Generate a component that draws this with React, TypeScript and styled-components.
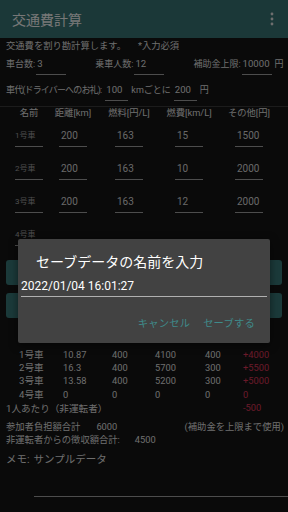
import styled, { createGlobalStyle } from 'styled-components';

const GlobalStyle = createGlobalStyle`
  html, body {
    margin: 0;
    padding: 0;
    background: #141414;
  }
  body {
    font-family: Roboto, "Noto Sans CJK JP", sans-serif;
  }
`;

const CARS = [
  { name: '1号車', distance: '200', fuel: '163', economy: '15', other: '1500' },
  { name: '2号車', distance: '200', fuel: '163', economy: '10', other: '2000' },
  { name: '3号車', distance: '200', fuel: '163', economy: '12', other: '2000' },
  { name: '4号車', distance: '', fuel: '', economy: '', other: '' },
];

const RESULTS = [
  ['1号車', '10.87', '400', '4100', '400', '+4000'],
  ['2号車', '16.3', '400', '5700', '300', '+5500'],
  ['3号車', '13.58', '400', '5200', '300', '+5000'],
  ['4号車', '0', '0', '0', '0', '0'],
];

const HEADERS = ['名前', '距離[km]', '燃料[円/L]', '燃費[km/L]', 'その他[円]'];

function MoreIcon() {
  return (
    <svg width="4" height="14" viewBox="0 0 4 14">
      <circle cx="2" cy="2" r="1.4" fill="#dddddd" />
      <circle cx="2" cy="7" r="1.4" fill="#dddddd" />
      <circle cx="2" cy="12" r="1.4" fill="#dddddd" />
    </svg>
  );
}

export default function App() {
  return (
    <Screen>
      <GlobalStyle />
      <AppBar>
        <Title>交通費計算</Title>
        <MoreIcon />
      </AppBar>

      <Content>
        <Intro>
          交通費を割り勘計算します。<Required>*入力必須</Required>
        </Intro>

        <FieldRow $gap={29}>
          <Field>
            <Label>車台数:</Label>
            <Input $w={30}>3</Input>
          </Field>
          <Field>
            <Label>乗車人数:</Label>
            <Input $w={30}>12</Input>
          </Field>
          <Field>
            <Label>補助金上限:</Label>
            <Input $w={30}>10000</Input>
            <Unit>円</Unit>
          </Field>
        </FieldRow>

        <FieldRow $gap={0} $top={9}>
          <Field>
            <Label $tight>車代(ドライバーへのお礼):</Label>
            <Input $w={23}>100</Input>
            <Unit>kmごとに</Unit>
            <Input $w={23}>200</Input>
            <Unit>円</Unit>
          </Field>
        </FieldRow>

        <Divider />

        <TableHead>
          {HEADERS.map((h) => (
            <HeadCell key={h}>{h}</HeadCell>
          ))}
        </TableHead>

        <TableBody>
          {CARS.map((car) => [
            <CarCell key={car.name + '-n'}>{car.name}</CarCell>,
            <Cell key={car.name + '-d'}>{car.distance}</Cell>,
            <Cell key={car.name + '-f'}>{car.fuel}</Cell>,
            <Cell key={car.name + '-e'}>{car.economy}</Cell>,
            <Cell key={car.name + '-o'}>{car.other}</Cell>,
          ])}
        </TableBody>

        <Buttons>
          <ActionButton />
          <ActionButton />
        </Buttons>

        <Results>
          {RESULTS.map((row) =>
            row.map((v, i) => (
              <ResultCell key={row[0] + i} $car={i === 0} $diff={i === 5}>
                {v}
              </ResultCell>
            )),
          )}
          <PerPerson>1人あたり（非運転者）</PerPerson>
          <ResultCell $diff>-500</ResultCell>
        </Results>

        <Totals>
          <TotalRow>
            <span>参加者負担額合計</span>
            <TotalValue $left={16}>6000</TotalValue>
            <Note>(補助金を上限まで使用)</Note>
          </TotalRow>
          <TotalRow>
            <span>非運転者からの徴収額合計:</span>
            <TotalValue $left={15}>4500</TotalValue>
          </TotalRow>
        </Totals>

        <MemoRow>
          <MemoLabel>メモ:</MemoLabel>
          <MemoInput>サンプルデータ</MemoInput>
        </MemoRow>
      </Content>

      <Overlay>
        <Dialog>
          <DialogTitle>セーブデータの名前を入力</DialogTitle>
          <DialogInput>2022/01/04 16:01:27</DialogInput>
          <DialogActions>
            <TextButton>キャンセル</TextButton>
            <TextButton>セーブする</TextButton>
          </DialogActions>
        </Dialog>
      </Overlay>
    </Screen>
  );
}

const Screen = styled.div`
  position: relative;
  width: 288px;
  height: 512px;
  overflow: hidden;
  background: #141414;
  color: #dcdcdc;
`;

const AppBar = styled.header`
  height: 38px;
  background: #367070;
  display: flex;
  align-items: center;
  justify-content: space-between;
  padding: 0 14px 0 12px;
  box-sizing: border-box;
`;

const Title = styled.h1`
  margin: 0;
  font-size: 14px;
  font-weight: 400;
  color: #eeeeee;
`;

const Content = styled.main`
  padding: 0 6px;
  font-size: 9.3px;
`;

const Intro = styled.div`
  padding-top: 1px;
  line-height: 13px;
`;

const Required = styled.span`
  margin-left: 12px;
`;

const FieldRow = styled.div<{ $gap: number; $top?: number }>`
  display: flex;
  align-items: flex-end;
  gap: ${(p) => p.$gap}px;
  margin-top: ${(p) => p.$top ?? 6}px;
  white-space: nowrap;
  font-size: 9px;
`;

const Field = styled.div`
  display: flex;
  align-items: flex-end;
`;

const Label = styled.span<{ $tight?: boolean }>`
  line-height: 11px;
  padding-bottom: 5px;
  margin-right: ${(p) => (p.$tight ? 4 : 1)}px;
  letter-spacing: ${(p) => (p.$tight ? -0.85 : 0)}px;
`;

const Unit = styled.span`
  line-height: 11px;
  padding-bottom: 5px;
  margin: 0 3px;
`;

const Input = styled.span<{ $w: number }>`
  display: inline-block;
  width: ${(p) => p.$w}px;
  line-height: 11px;
  padding: 0 0 5px 1px;
  box-sizing: border-box;
  border-bottom: 1px solid #9a9a9a;
  font-size: 9.6px;
`;

const Divider = styled.div`
  height: 1px;
  background: #383838;
  margin: 5px -6px 0;
`;

const TableHead = styled.div`
  display: grid;
  grid-template-columns: 44px 56px 60px 60px 28px;
  padding-left: 9px;
  line-height: 12px;
`;

const HeadCell = styled.div`
  width: 28px;
  display: flex;
  justify-content: center;
  white-space: nowrap;
`;

const TableBody = styled.div`
  display: grid;
  grid-template-columns: 44px 56px 60px 60px 28px;
  row-gap: 13px;
  padding-left: 9px;
  margin-top: 8px;
`;

const Cell = styled.div`
  width: 28px;
  height: 20px;
  box-sizing: border-box;
  display: flex;
  align-items: flex-end;
  padding: 0 0 4px 2px;
  border-bottom: 1px solid #9a9a9a;
  font-size: 10px;
  line-height: 12px;
  color: #d0d0d0;
`;

const CarCell = styled(Cell)`
  font-size: 8px;
  padding-left: 0;
  color: #9c9c9c;
`;

const Buttons = styled.div`
  display: flex;
  flex-direction: column;
  gap: 8px;
  margin-top: 14px;
`;

const ActionButton = styled.div`
  height: 25px;
  border-radius: 3px;
  background: #367474;
`;

const Results = styled.div`
  display: grid;
  grid-template-columns: 57px 49px 43px 50px 38px auto;
  line-height: 13.2px;
  margin-top: 30px;
`;

const ResultCell = styled.div<{ $car?: boolean; $diff?: boolean }>`
  padding-left: ${(p) => (p.$car ? 13 : 0)}px;
  color: ${(p) => (p.$diff ? '#d63454' : 'inherit')};
  font-size: ${(p) => (p.$car ? 9.6 : 9.3)}px;
  white-space: nowrap;
`;

const PerPerson = styled.div`
  grid-column: 1 / 6;
  font-size: 9.6px;
  margin-top: 1px;
`;

const Totals = styled.div`
  margin-top: 5px;
  line-height: 13px;
`;

const TotalRow = styled.div`
  display: flex;
  white-space: nowrap;
`;

const TotalValue = styled.span<{ $left: number }>`
  margin-left: ${(p) => p.$left}px;
`;

const Note = styled.span`
  margin-left: auto;
  margin-right: -2px;
`;

const MemoRow = styled.div`
  display: flex;
  align-items: flex-start;
  margin-top: 7px;
  margin-right: -6px;
  font-size: 10.5px;
`;

const MemoLabel = styled.span`
  line-height: 14px;
  margin-right: 4px;
`;

const MemoInput = styled.div`
  flex: 1;
  height: 43px;
  line-height: 14px;
  border-bottom: 1px solid #9a9a9a;
`;

const Overlay = styled.div`
  position: absolute;
  inset: 0;
  background: rgba(0, 0, 0, 0.5);
  display: flex;
  justify-content: center;
  align-items: flex-start;
  padding-top: 239px;
`;

const Dialog = styled.div`
  width: 252px;
  box-sizing: border-box;
  background: #424242;
  border-radius: 2px;
  padding: 13px 3px 12px;
  box-shadow: 0 2px 8px rgba(0, 0, 0, 0.5);
`;

const DialogTitle = styled.div`
  padding-left: 15px;
  font-size: 14px;
  line-height: 20px;
  color: #ffffff;
`;

const DialogInput = styled.div`
  margin-top: 6px;
  font-size: 12px;
  line-height: 16px;
  padding-bottom: 2px;
  border-bottom: 1.5px solid #b0b0b0;
  color: #ffffff;
`;

const DialogActions = styled.div`
  display: flex;
  justify-content: flex-end;
  gap: 13px;
  margin-top: 20px;
  padding-right: 12px;
`;

const TextButton = styled.span`
  font-size: 10.3px;
  line-height: 14px;
  color: #3f8b8b;
  letter-spacing: 0.2px;
`;
